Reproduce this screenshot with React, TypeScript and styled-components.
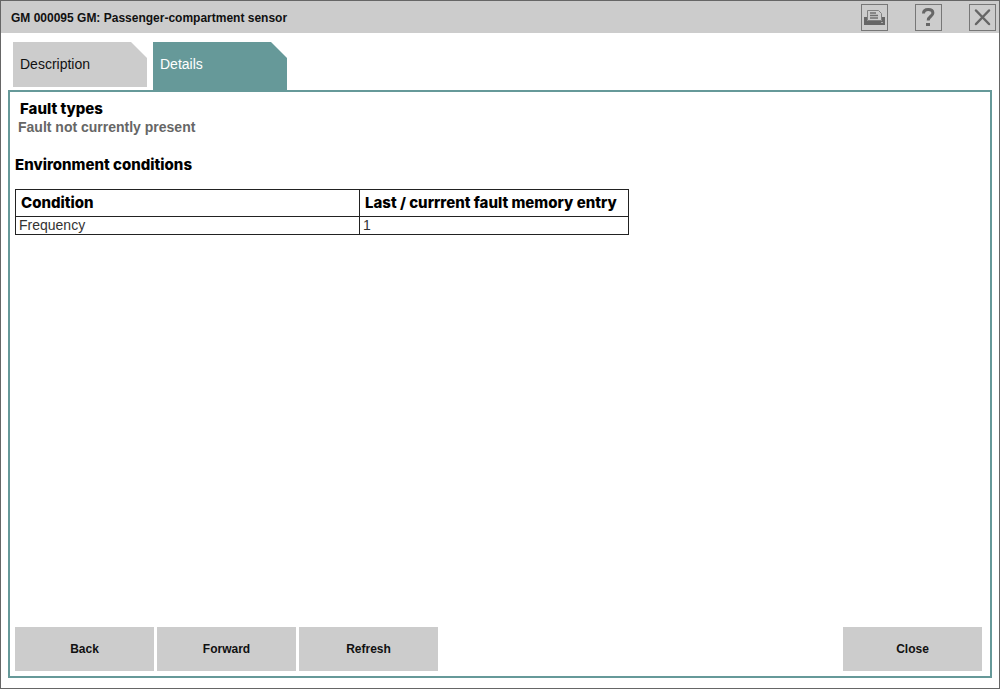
import React, { useState } from "react";
import styled, { createGlobalStyle } from "styled-components";

const GlobalStyle = createGlobalStyle`
  * { box-sizing: border-box; }
  body {
    margin: 0;
    background: #fff;
    color: #111;
    font-family: "Liberation Sans", Arial, sans-serif;
    font-size: 14px;
  }
`;

const Window = styled.div`
  display: flex;
  flex-direction: column;
  min-height: 100vh;
  border: 1px solid #666;
  background: #fff;
`;

const TitleBar = styled.header`
  display: flex;
  align-items: center;
  justify-content: space-between;
  height: 32px;
  padding: 0 3px 0 10px;
  background: #ccc;
`;

const Title = styled.h1`
  margin: 0;
  padding-top: 2px;
  font-size: 12px;
  line-height: 16px;
  font-weight: bold;
`;

const Tools = styled.div`
  display: flex;
  gap: 27px;
`;

const ToolButton = styled.button`
  display: block;
  width: 27px;
  height: 27px;
  padding: 0;
  border: 1px solid #777;
  background: #ccc;
  svg { display: block; }
`;

const Tabs = styled.nav`
  display: flex;
  align-items: flex-start;
  gap: 6px;
  height: 57px;
  padding: 9px 12px 0;
`;

const Tab = styled.button<{ $active: boolean }>`
  width: 134px;
  height: ${(p) => (p.$active ? 48 : 45)}px;
  padding: 14px 7px;
  border: 0;
  background: ${(p) => (p.$active ? "#669999" : "#cccccc")};
  color: ${(p) => (p.$active ? "#fff" : "#111")};
  clip-path: polygon(0 0, calc(100% - 16px) 0, 100% 16px, 100% 100%, 0 100%);
  font: 14px/16px "Liberation Sans", Arial, sans-serif;
  text-align: left;
  display: flex;
  align-items: flex-start;
`;

const Panel = styled.main`
  display: flex;
  flex: 1;
  flex-direction: column;
  margin: 0 7px 10px;
  padding: 8px 8px 5px 5px;
  border: 2px solid #669999;
`;

const Heading = styled.h2<{ $indent?: boolean }>`
  margin: 0;
  padding-left: ${(p) => (p.$indent ? 5 : 0)}px;
  color: #000;
  font: 800 15px/18px Inter, "Liberation Sans", sans-serif;
`;

const Status = styled.p`
  margin: 0 0 20px;
  padding-left: 3px;
  color: #666;
  font-size: 14px;
  line-height: 18px;
  font-weight: bold;
`;

const Conditions = styled.table`
  width: 614px;
  max-width: 100%;
  margin-top: 15px;
  border-collapse: collapse;
  table-layout: fixed;
`;

const HeadCell = styled.th`
  height: 27px;
  padding: 0 5px;
  border: 1px solid #222;
  color: #000;
  font: 800 15px/18px Inter, "Liberation Sans", sans-serif;
  text-align: left;
  white-space: nowrap;
  &:first-child { width: 344px; }
`;

const Cell = styled.td`
  height: 18px;
  padding: 0 3px;
  border: 1px solid #222;
  color: #333;
  font-size: 14px;
  line-height: 17px;
`;

const Actions = styled.footer`
  display: flex;
  gap: 3px;
  margin-top: auto;
`;

const ActionButton = styled.button<{ $end?: boolean }>`
  width: 139px;
  height: 44px;
  margin-left: ${(p) => (p.$end ? "auto" : "0")};
  padding: 0;
  border: 0;
  background: #ccc;
  color: #111;
  font: bold 12px/16px "Liberation Sans", Arial, sans-serif;
`;

const PrintIcon = () => (
  <svg width="25" height="25" viewBox="0 0 25 25" fill="none" aria-hidden="true">
    <path d="M2 12h3v4h15v-4h3v8H2z" fill="#666" />
    <path d="M5.500 15.500v-10h11l3 3v7z" fill="#ccc" stroke="#808080" />
    <path d="M8 8h6M8 10.500h8M8 13h8" stroke="#707070" strokeWidth="1.500" />
    <path d="M19 17.500h2" stroke="#aaa" />
  </svg>
);

const HelpIcon = () => (
  <svg width="25" height="25" viewBox="0 0 25 25" fill="none" aria-hidden="true">
    <path
      d="M7.500 8.500C7.500 5.700 9.200 4.500 12.200 4.500s4.700 1.300 4.700 3.600c0 3.200-4.700 3.300-4.700 7.400"
      stroke="#666"
      strokeWidth="3"
    />
    <rect x="10" y="18" width="4" height="3" fill="#666" />
  </svg>
);

const CloseIcon = () => (
  <svg width="25" height="25" viewBox="0 0 25 25" fill="none" aria-hidden="true">
    <path d="M6 5.500l13 13.500M19 5.500L6 19" stroke="#666" strokeWidth="2.500" strokeLinecap="round" />
  </svg>
);

const tabs = ["Description", "Details"];

export default function App() {
  const [active, setActive] = useState("Details");
  return (
    <>
      <GlobalStyle />
      <Window>
        <TitleBar>
          <Title>GM 000095 GM: Passenger-compartment sensor</Title>
          <Tools>
            <ToolButton aria-label="Print"><PrintIcon /></ToolButton>
            <ToolButton aria-label="Help"><HelpIcon /></ToolButton>
            <ToolButton aria-label="Close window"><CloseIcon /></ToolButton>
          </Tools>
        </TitleBar>
        <Tabs>
          {tabs.map((name) => (
            <Tab key={name} $active={name === active} onClick={() => setActive(name)}>
              {name}
            </Tab>
          ))}
        </Tabs>
        <Panel>
          <Heading $indent>Fault types</Heading>
          <Status>Fault not currently present</Status>
          <Heading>Environment conditions</Heading>
          <Conditions>
            <thead>
              <tr>
                <HeadCell scope="col">Condition</HeadCell>
                <HeadCell scope="col">Last / currrent fault memory entry</HeadCell>
              </tr>
            </thead>
            <tbody>
              <tr>
                <Cell>Frequency</Cell>
                <Cell>1</Cell>
              </tr>
            </tbody>
          </Conditions>
          <Actions>
            <ActionButton>Back</ActionButton>
            <ActionButton>Forward</ActionButton>
            <ActionButton>Refresh</ActionButton>
            <ActionButton $end>Close</ActionButton>
          </Actions>
        </Panel>
      </Window>
    </>
  );
}
